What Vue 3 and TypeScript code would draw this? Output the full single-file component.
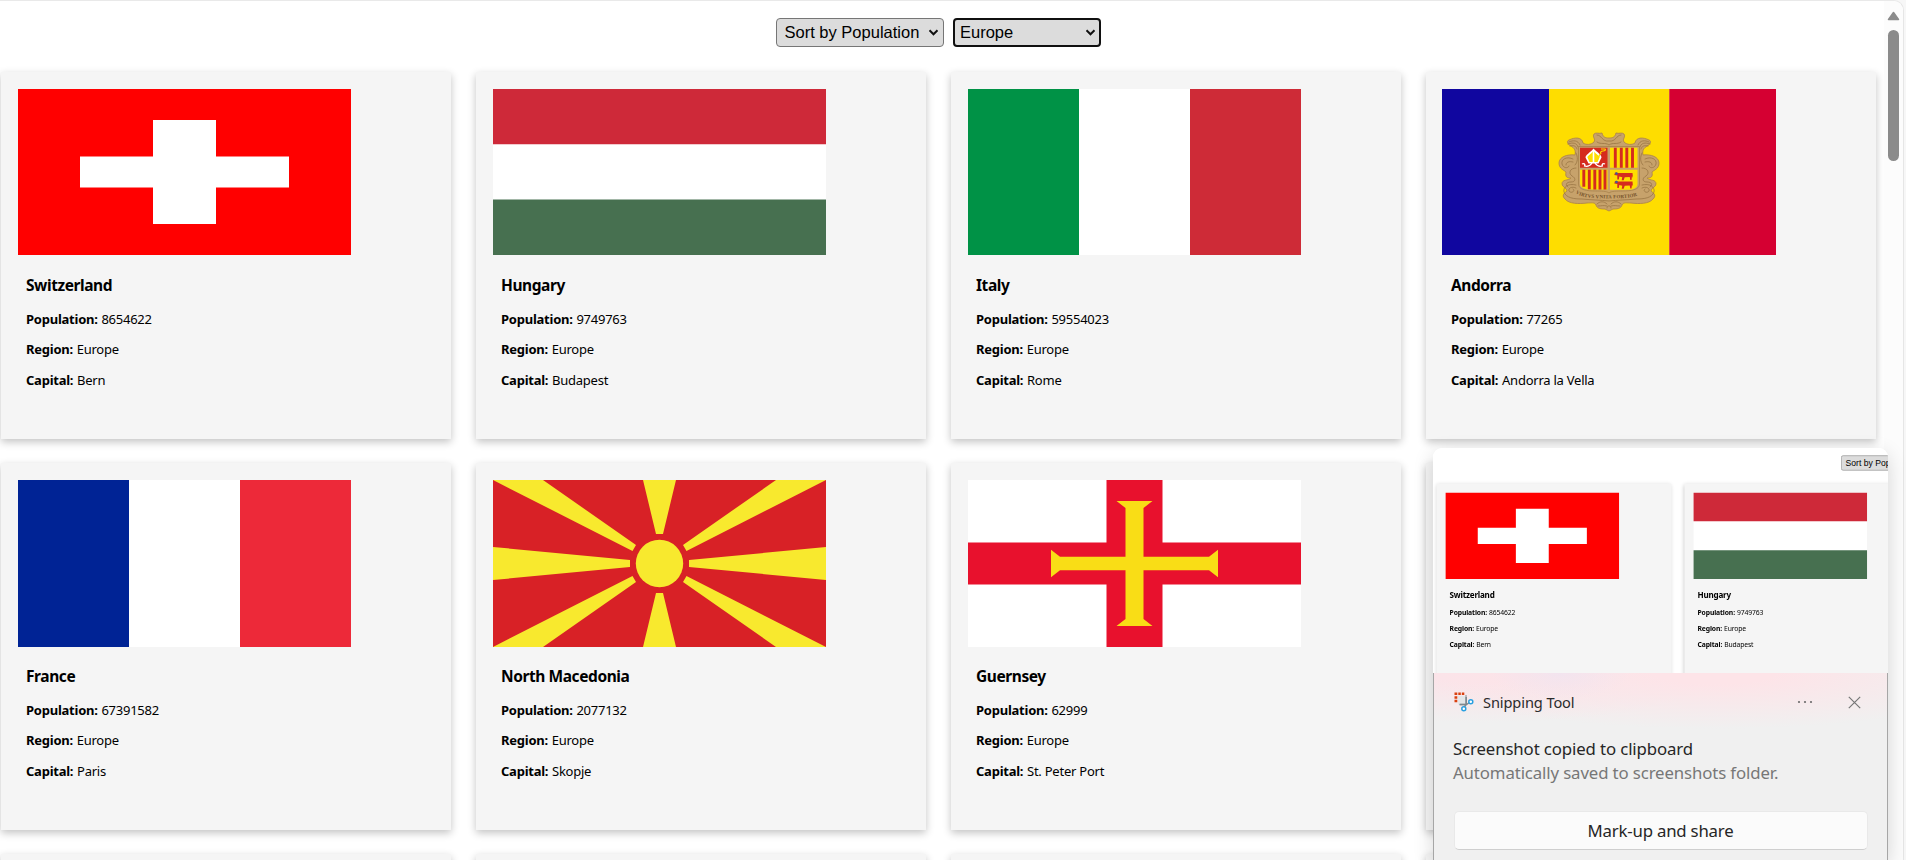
<script setup lang="ts">
import { ref } from 'vue'

interface Country {
  name: string
  population: number
  region: string
  capital: string
  flag: string
}

const sortBy = ref('population')
const region = ref('Europe')

const make = (name: string, population: number, capital: string, flag: string): Country => ({
  name,
  population,
  region: 'Europe',
  capital,
  flag,
})

const countries: Country[] = [
  make('Switzerland', 8654622, 'Bern', 'ch'),
  make('Hungary', 9749763, 'Budapest', 'hu'),
  make('Italy', 59554023, 'Rome', 'it'),
  make('Andorra', 77265, 'Andorra la Vella', 'ad'),
  make('France', 67391582, 'Paris', 'fr'),
  make('North Macedonia', 2077132, 'Skopje', 'mk'),
  make('Guernsey', 62999, 'St. Peter Port', 'gg'),
]
const previewCountries = countries.slice(0, 2)
</script>

<template>
  <svg class="defs" aria-hidden="true">
    <symbol id="flag-ch" viewBox="0 0 333 166" preserveAspectRatio="none">
      <path fill="#f00" d="M0 0h333v166H0z" />
      <path fill="#fff" d="M135 31h63v36.4h73v31.2h-73V135h-63V98.600h-73V67.400h73z" />
    </symbol>
    <symbol id="flag-hu" viewBox="0 0 333 166" preserveAspectRatio="none">
      <path fill="#fff" d="M0 0h333v166H0z" />
      <path fill="#ce2939" d="M0 0h333v55.300H0z" />
      <path fill="#477050" d="M0 110.600h333V166H0z" />
    </symbol>
    <symbol id="flag-it" viewBox="0 0 333 166" preserveAspectRatio="none">
      <path fill="#fff" d="M0 0h333v166H0z" />
      <path fill="#009246" d="M0 0h111v166H0z" />
      <path fill="#ce2b37" d="M222 0h111v166H222z" />
    </symbol>
    <symbol id="flag-fr" viewBox="0 0 333 166" preserveAspectRatio="none">
      <path fill="#fff" d="M0 0h333v166H0z" />
      <path fill="#002395" d="M0 0h111v166H0z" />
      <path fill="#ed2939" d="M222 0h111v166H222z" />
    </symbol>
    <symbol id="flag-mk" viewBox="0 0 333 167" preserveAspectRatio="none">
      <path fill="#d82126" d="M0 0h333v167H0z" />
      <g fill="#f8e92e">
        <path d="M150 0h33l-13 54h-7zM150 167h33l-13-54h-7zM0 67l137 13v7L0 100zM333 67l-137 13v7l137 13z" />
        <path d="M0 0h50l93 65-3.500 6zM333 0h-50l-93 65 3.500 6zM0 167h50l93-65-3.500-6zM333 167h-50l-93-65 3.500-6z" />
        <circle cx="166.500" cy="83.500" r="23.700" />
      </g>
    </symbol>
    <symbol id="flag-gg" viewBox="0 0 333 167" preserveAspectRatio="none">
      <path fill="#fff" d="M0 0h333v167H0z" />
      <path fill="#e8112d" d="M138.500 0h56v62.500H333v42H194.500V167h-56v-62.500H0v-42h138.500z" />
      <path
        fill="#f9dd16"
        d="M148.500 21h36l-9 7v48.700H241l9-7v27.600l-9-7h-65.500V139l9 7h-36l9-7V90.300H92l-9 7V69.700l9 7h65.500V28z"
      />
    </symbol>
    <symbol id="flag-ad" viewBox="0 0 334 166" preserveAspectRatio="none">
      <path fill="#10069f" d="M0 0h107v166H0z" />
      <path fill="#fedd00" d="M107 0h120.500v166H107z" />
      <path fill="#d50032" d="M227.300 0H334v166H227.300z" />
      <path
        fill="#c7a26b"
        stroke="#a9814d"
        stroke-width="0.8"
        d="M167 49c4 0 6-1 7-5 3 1 6-1 8 1 2 3-2 5 0 8 3 3 8 3 11 1 1-6 8-6 14-3 3 1 1 5-2 6-3 2-5 4-4 9 8-1 16 2 16 8 0 6-5 7-7 9 1 5-1 6-5 6 3 3 9 1 9 6 0 3-5 4-5 7 4 3 5 5 2 8-4 5-14 5-22 4-4 0-8-1-9 2-1 4-6 4-9 4l-4 2-4-2c-3 0-8 0-9-4-1-3-5-2-9-2-8 1-18 1-22-4-3-3-2-5 2-8 0-3-5-4-5-7 0-5 6-3 9-6-4 0-6-1-5-6-2-2-7-3-7-9 0-6 8-9 16-8 1-5-1-7-4-9-3-1-5-5-2-6 6-3 13-3 14 3 3 2 8 2 11-1 2-3-2-5 0-8 2-2 5 0 8-1 1 4 3 5 7 5z"
      />
      <g fill="none" stroke="#94703f" stroke-width="0.7" stroke-linecap="round">
        <path d="M127 53c4-2 9-2 11 3M126 55c5-2 9-1 10 3M128 57c4-1 6 0 7 3M207 53c-4-2-9-2-11 3M208 55c-5-2-9-1-10 3M206 57c-4-1-6 0-7 3" />
        <path d="M155 46c5 0 5 7 12 6 7 1 7-6 12-6M155 53c4 3 8 0 12 3 4-3 8 0 12-3" />
        <path d="M131 70c-6-3-12 0-11 5 1 4 6 5 7 2M131 73c-4-1-7 0-7 3M134 79c-6 0-8 5-4 8 4 2 4 6-1 6-5 0-6 3-3 5M134 64c2 4 2 9-1 12" />
        <path d="M203 70c6-3 12 0 11 5-1 4-6 5-7 2M203 73c4-1 7 0 7 3M200 79c6 0 8 5 4 8-4 2-4 6 1 6 5 0 6 3 3 5M200 64c-2 4-2 9 1 12" />
        <path d="M134 96c-8-2-13 2-12 7 2 6 10 7 18 7 10 1 18 1 27 2 9-1 17-1 27-2 8 0 16-1 18-7 1-5-4-9-12-7M134 99c-4-2-8 0-7 3 2 3 7 0 4-2M200 99c4-2 8 0 7 3-2 3-7 0-4-2" />
        <path d="M155 115c3-3 7-3 10 0M156 117c4 0 5-1 9 0M179 115c-3-3-7-3-10 0M178 117c-4 0-5-1-9 0M165 119c0-3 4-3 4 0" />
      </g>
      <path fill="#c7a26b" stroke="#a27c48" stroke-width="0.7" d="M136.500 57.500h61V95c0 6-9 7-17 7-6 0-11 0-13.500 2-2.500-2-7.500-2-13.500-2-8 0-17-1-17-7z" />
      <path fill="#d52b1e" d="M138 58.700h27.500v20H138z" />
      <path fill="#fedd00" d="M168 58.700h27.500v20H168zM138 80.700h27.500v19.800H149c-6 0-11-2-11-6zM168 80.700h27.500v14c0 4-4 6-10 6H168z" />
      <path
        stroke="#d52b1e"
        stroke-width="2.900"
        d="M173.300 58.700v20M179.300 58.700v20M184.800 58.700v20M190.500 58.700v20M141.800 80.700v17M147.300 80.700v19.500M152.800 80.700v19.800M158 80.700v19.800M163 80.700v19.800"
      />
      <path fill="#fff" d="M151.500 59.500c4 4 8 6 8 9l-3 6h-10l-3-6c0-3 5-5 8-9z" />
      <path fill="#fedd00" d="M150.700 62.500V73h-3.200l-2.200-5c1-2 4-3 5.400-5.500zM152.300 62.500V73h3.200l2.200-5c-1-2-4-3-5.400-5.500z" />
      <path fill="none" stroke="#fff" stroke-width="1.300" d="M150 74c-2 3-5 4-8 3M153 74c2 3 5 4 8 3M140 75c2-1 3 0 3 2M163 75c-2-1-3 0-3 2" />
      <path fill="none" stroke="#fedd00" stroke-width="1.200" d="M159 65c-1-2 0-3 2-3s3-1 2-2h-4M158 65l-3 7" />
      <g fill="#d52b1e">
        <path id="cow" d="M173 83.500l3 .5h14.500l.5 5-1-2-.5 4h-1.200l-.6-3-5 .2-1 3h-2l.6-3-3-.8-.5 3h-1.500v-4l-3-.5z" />
        <use href="#cow" y="8.500" />
        <path fill="#3f5a9c" d="M174 83l2 1-1 2-2-1zM174 91.500l2 1-1 2-2-1z" />
      </g>
    </symbol>
    <symbol id="chevron" viewBox="0 0 10 7">
      <path d="M1 1.300l4 4 4-4" fill="none" stroke="#111" stroke-width="2" />
    </symbol>
  </svg>

  <div class="window">
    <main class="page">
      <div class="filters">
        <label class="picker sort">
          <select v-model="sortBy">
            <option value="population">Sort by Population</option>
          </select>
          <svg class="chevron"><use href="#chevron" /></svg>
        </label>
        <label class="picker region">
          <select v-model="region">
            <option>Europe</option>
          </select>
          <svg class="chevron"><use href="#chevron" /></svg>
        </label>
      </div>
      <section class="grid">
        <article v-for="c in countries" :key="c.name" class="card">
          <svg class="flag" :class="c.flag">
            <use :href="'#flag-' + c.flag" />
            <g v-if="c.flag === 'ad'">
              <path id="motto-arc" fill="none" d="M133.500 104c8 6 22 5 33.500 5.500 11.500-.5 25.500.5 33.500-5.500" />
              <text class="motto"><textPath href="#motto-arc">VIRTVS VNITA FORTIOR</textPath></text>
            </g>
          </svg>
          <div class="info">
            <h3>{{ c.name }}</h3>
            <p><b>Population:</b> {{ c.population }}</p>
            <p><b>Region:</b> {{ c.region }}</p>
            <p><b>Capital:</b> {{ c.capital }}</p>
          </div>
        </article>
        <article v-for="n in 5" :key="n" class="card"></article>
      </section>
    </main>
    <div class="scrollbar">
      <svg class="arrow" viewBox="0 0 13 10"><path d="M6.500 1.500L11.500 8.500H1.500z" fill="#8b8b8b" stroke="#8b8b8b" stroke-width="1.500" stroke-linejoin="round" /></svg>
      <div class="thumb"></div>
    </div>
  </div>

  <aside class="toast">
    <div class="preview">
      <div class="preview-page">
        <div class="filters">
          <div class="picker sort"><span class="value">Sort by Population</span></div>
          <div class="picker region"></div>
        </div>
        <div class="grid">
          <div v-for="c in previewCountries" :key="c.name" class="card">
            <svg class="flag"><use :href="'#flag-' + c.flag" /></svg>
            <div class="info">
              <h3>{{ c.name }}</h3>
              <p><b>Population:</b> {{ c.population }}</p>
              <p><b>Region:</b> {{ c.region }}</p>
              <p><b>Capital:</b> {{ c.capital }}</p>
            </div>
          </div>
        </div>
      </div>
    </div>
    <div class="body">
      <header class="bar">
        <svg class="logo" viewBox="0 0 20 20">
          <path d="M4 4h8v9.500H5.500L4 12z" fill="#e3e6e8" />
          <path d="M12 3v9.500M5 12.500h7" stroke="#a9b0b5" stroke-width="1.600" fill="none" />
          <path d="M12.200 5v7.500L10 15.500M6 12.500h6.500l3-2" stroke="#7e878d" stroke-width="1.500" fill="none" />
          <path d="M.5.500h2.800v2.500H.500zM4.300.500h2.500V3H4.300zM7.800.500h2.500V3H7.800zM.500 4.300h2.800v2.400H.500zM.500 7.800h2.800v2.400H.500z" fill="#d9400f" />
          <circle cx="16.800" cy="9.800" r="2" fill="#fff" stroke="#2aa0e0" stroke-width="1.500" />
          <circle cx="9.800" cy="16.800" r="2" fill="#fff" stroke="#2aa0e0" stroke-width="1.500" />
        </svg>
        <span class="app">Snipping Tool</span>
        <svg class="dots" viewBox="0 0 16 4"><g fill="#6b6b6b"><circle cx="2" cy="2" r="1.100" /><circle cx="8" cy="2" r="1.100" /><circle cx="14" cy="2" r="1.100" /></g></svg>
        <svg class="close" viewBox="0 0 13 13"><path d="M.800.800l11.400 11.400M12.200.800L.800 12.200" stroke="#767676" stroke-width="1.200" /></svg>
      </header>
      <div class="message">
        <div class="title">Screenshot copied to clipboard</div>
        <div class="sub">Automatically saved to screenshots folder.</div>
      </div>
      <button class="action" type="button">Mark-up and share</button>
    </div>
  </aside>
</template>

<style>
html,
body {
  margin: 0;
  height: 860px;
  overflow: hidden;
  background: #f7f7f7;
}
</style>

<style scoped>
.defs {
  position: absolute;
  width: 0;
  height: 0;
}
.motto {
  font: bold 5px "Liberation Serif", serif;
  letter-spacing: 0.150px;
  fill: #75522a;
}
.window {
  box-sizing: border-box;
  width: 1904px;
  height: 860px;
  display: flex;
  overflow: hidden;
  background: #fff;
  border-top: 1px solid #e9e9e9;
  border-right: 1px solid #e6e6e6;
  border-top-right-radius: 10px;
}
.page {
  width: 1884px;
  flex: none;
  overflow: hidden;
}
.filters {
  display: flex;
  gap: 9px;
  padding: 17px 0 0 776px;
  height: 54px;
  box-sizing: border-box;
}
.picker {
  position: relative;
  box-sizing: border-box;
  height: 29px;
  border: 1px solid #767676;
  border-radius: 4px;
  background: #dcdcdc;
  font: 16.500px "Liberation Sans", Arial, sans-serif;
  flex: none;
}
.sort {
  width: 168px;
}
.region {
  width: 148px;
  border: 2px solid #101010;
}
.picker select,
.value {
  appearance: none;
  display: block;
  box-sizing: border-box;
  width: 100%;
  height: 100%;
  border: 0;
  outline: 0;
  padding: 0 0 1px 7.500px;
  background: transparent;
  font: inherit;
  color: #000;
  line-height: 26px;
}
.picker.region select {
  padding-left: 5px;
  line-height: 24px;
}
.chevron {
  position: absolute;
  right: 4px;
  top: 10px;
  width: 11px;
  height: 7px;
  pointer-events: none;
}
.region .chevron {
  right: 3px;
  top: 9px;
}
.grid {
  display: grid;
  grid-template-columns: repeat(4, 450px);
  grid-auto-rows: 367px;
  gap: 24px 25px;
  padding: 17px 0 0 1px;
}
.card {
  box-sizing: border-box;
  padding: 17px;
  background: #f5f5f5;
  box-shadow: 0 3px 8px rgba(0, 0, 0, 0.24);
}
.flag {
  display: block;
  width: 333px;
  height: 166px;
}
.flag.ad {
  width: 334px;
  margin-left: -1px;
}
.flag.mk,
.flag.gg,
.flag.fr {
  height: 167px;
  margin-bottom: -1px;
}
.info {
  padding: 19px 0 0 8px;
  font: 13px/20px "Noto Sans", sans-serif;
  letter-spacing: -0.240px;
  color: #000;
}
.info h3 {
  margin: 0;
  font-size: 15.500px;
  line-height: 22px;
  letter-spacing: -0.420px;
}
.info p {
  margin: 0 0 10.500px;
}
.info b {
  margin-right: 0.600px;
}
.info h3 + p {
  margin-top: 12.500px;
}
.scrollbar {
  flex: 1;
  background: #fcfcfc;
  display: flex;
  flex-direction: column;
  align-items: center;
  padding: 10px 0 0;
  border-top-right-radius: 10px;
}
.arrow {
  width: 13px;
  height: 10px;
}
.thumb {
  width: 11px;
  height: 131px;
  margin-top: 9px;
  border-radius: 6px;
  background: #8b8b8b;
}
.toast {
  position: absolute;
  left: 1433px;
  top: 448px;
  width: 455px;
  height: 412px;
  display: flex;
  flex-direction: column;
  overflow: hidden;
  border-radius: 9px 9px 0 0;
  box-shadow: 0 6px 20px rgba(0, 0, 0, 0.16);
}
.preview {
  height: 225px;
  flex: none;
  overflow: hidden;
  background: #fff;
}
.preview-page {
  width: 1884px;
  height: 440px;
  margin: -2.500px 0 0 2.500px;
  transform: scale(0.522);
  transform-origin: 0 0;
}
.preview-page .filters {
  height: 55px;
  padding-top: 18px;
}
.body {
  flex: 1;
  box-sizing: border-box;
  border: solid #a6a6a6;
  border-width: 0 1px;
  padding: 18px 20px 0;
  font-family: "Noto Sans", sans-serif;
  background:
    radial-gradient(ellipse 70px 26px at 28% 0, rgba(240, 228, 240, 0.8), rgba(240, 228, 240, 0)),
    radial-gradient(ellipse 300px 56px at 62% 0, #fde4e8 20%, rgba(253, 228, 232, 0)),
    radial-gradient(ellipse 240px 50px at 10% 0, #fbe4e9 20%, rgba(251, 228, 233, 0)),
    #f0f0f0;
}
.bar {
  display: flex;
  align-items: center;
  height: 22px;
}
.logo {
  width: 20px;
  height: 20px;
}
.app {
  margin-left: 9px;
  flex: 1;
  font-size: 14.600px;
  letter-spacing: -0.100px;
  color: #2b2b2b;
}
.dots {
  width: 16px;
  height: 4px;
  margin-right: 35px;
}
.close {
  width: 13px;
  height: 13px;
  margin-right: 6px;
}
.message {
  margin-top: 24px;
  font-size: 16.800px;
  line-height: 24px;
  letter-spacing: -0.120px;
  height: 74px;
  margin-left: -1px;
}
.title {
  color: #262626;
}
.sub {
  color: #777;
}
.action {
  display: block;
  box-sizing: border-box;
  width: 414px;
  height: 39px;
  padding: 0;
  margin-left: -0.500px;
  border: 1px solid #e9e9e9;
  border-bottom-color: #cfcfcf;
  border-radius: 5px;
  background: #fbfbfb;
  font: 16.800px "Noto Sans", sans-serif;
  letter-spacing: -0.200px;
  color: #262626;
}
</style>
